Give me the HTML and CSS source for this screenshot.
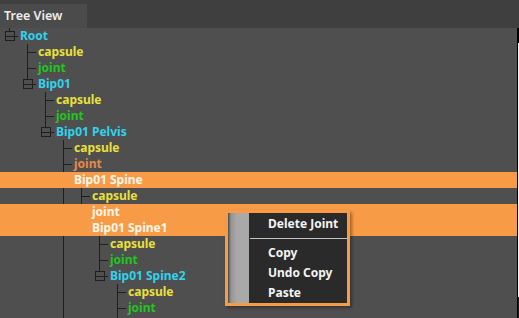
FILE: index.html
```html
<!DOCTYPE html>
<html lang="en">

<head>
    <meta charset="UTF-8">
    <title>Tree View</title>
    <link rel="stylesheet" href="styles.css">
</head>

<body>
    <div class="tab-bar">
        <div class="tab">Tree View</div>
    </div>

    <div class="main">
        <div class="tree">
            <div class="row"><span class="g end"><i class="box"></i></span><span class="label bone">Root</span></div>
            <div class="row"><span class="g"></span><span class="g tee"></span><span class="label capsule">capsule</span></div>
            <div class="row"><span class="g"></span><span class="g tee"></span><span class="label joint">joint</span></div>
            <div class="row"><span class="g"></span><span class="g end"><i class="box"></i></span><span class="label bone">Bip01</span></div>
            <div class="row"><span class="g"></span><span class="g"></span><span class="g tee"></span><span class="label capsule">capsule</span></div>
            <div class="row"><span class="g"></span><span class="g"></span><span class="g tee"></span><span class="label joint">joint</span></div>
            <div class="row"><span class="g"></span><span class="g"></span><span class="g end"><i class="box"></i></span><span class="label bone">Bip01 Pelvis</span></div>
            <div class="row"><span class="g"></span><span class="g"></span><span class="g"></span><span class="g tee"></span><span class="label capsule">capsule</span></div>
            <div class="row"><span class="g"></span><span class="g"></span><span class="g"></span><span class="g tee"></span><span class="label joint-alt">joint</span></div>
            <div class="row sel"><span class="g"></span><span class="g"></span><span class="g"></span><span class="g"></span><span class="label">Bip01 Spine</span></div>
            <div class="row"><span class="g"></span><span class="g"></span><span class="g"></span><span class="g pipe"></span><span class="g tee"></span><span class="label capsule">capsule</span></div>
            <div class="row sel"><span class="g"></span><span class="g"></span><span class="g"></span><span class="g"></span><span class="g"></span><span class="label">joint</span></div>
            <div class="row sel"><span class="g"></span><span class="g"></span><span class="g"></span><span class="g"></span><span class="g"></span><span class="label">Bip01 Spine1</span></div>
            <div class="row"><span class="g"></span><span class="g"></span><span class="g"></span><span class="g pipe"></span><span class="g"></span><span class="g tee"></span><span class="label capsule">capsule</span></div>
            <div class="row"><span class="g"></span><span class="g"></span><span class="g"></span><span class="g pipe"></span><span class="g"></span><span class="g tee"></span><span class="label joint">joint</span></div>
            <div class="row"><span class="g"></span><span class="g"></span><span class="g"></span><span class="g pipe"></span><span class="g"></span><span class="g end"><i class="box"></i></span><span class="label bone">Bip01 Spine2</span></div>
            <div class="row"><span class="g"></span><span class="g"></span><span class="g"></span><span class="g pipe"></span><span class="g"></span><span class="g"></span><span class="g tee"></span><span class="label capsule">capsule</span></div>
            <div class="row"><span class="g"></span><span class="g"></span><span class="g"></span><span class="g pipe"></span><span class="g"></span><span class="g"></span><span class="g tee"></span><span class="label joint">joint</span></div>
            <div class="row"><span class="g"></span><span class="g"></span><span class="g"></span><span class="g pipe"></span><span class="g"></span><span class="g"></span><span class="g pipe"></span></div>

            <div class="menu">
                <div class="menu-strip"></div>
                <div class="menu-items">
                    <div class="menu-item">Delete Joint</div>
                    <div class="menu-sep"></div>
                    <div class="menu-item">Copy</div>
                    <div class="menu-item">Undo Copy</div>
                    <div class="menu-item">Paste</div>
                </div>
            </div>
        </div>
        <div class="edge"></div>
        <div class="track"></div>
    </div>
</body>

</html>
```

FILE: styles.css
```css
body {
    margin: 0;
    width: 519px;
    height: 318px;
    overflow: hidden;
    background-color: #3f3f3f;
    font-family: 'Noto Sans', 'DejaVu Sans', sans-serif;
}

.tab-bar {
    height: 28px;
    display: flex;
    align-items: flex-end;
    background-color: #3f3f3f;
}

.tab {
    width: 83px;
    height: 24px;
    padding-left: 4px;
    line-height: 23px;
    font-size: 12.5px;
    font-weight: 600;
    color: #ececec;
    background-color: #4b4b4b;
}

.main {
    display: flex;
    height: 290px;
}

.tree {
    position: relative;
    flex: 1;
    overflow: hidden;
    background-color: #4f4f4f;
}

.edge {
    width: 1px;
    background-color: #000;
}

.track {
    width: 1px;
    background: linear-gradient(to bottom, #000 15px, #f0f0f0 15px, #f0f0f0 269px, #1c1c1c 269px);
}

.row {
    display: flex;
    height: 16px;
    align-items: center;
}

.row.sel {
    background-color: #f89b46;
}

.g {
    flex: none;
    width: 18px;
    height: 16px;
    background-repeat: no-repeat;
}

/* tree guide lines */
.g.pipe {
    background-image: linear-gradient(#1f1f1f, #1f1f1f);
    background-position: 9px 0;
    background-size: 1px 16px;
}

.g.tee {
    background-image: linear-gradient(#1f1f1f, #1f1f1f), linear-gradient(#1f1f1f, #1f1f1f);
    background-position: 9px 0, 9px 8px;
    background-size: 1px 16px, 9px 1px;
}

.g.end {
    background-image: linear-gradient(#1f1f1f, #1f1f1f), linear-gradient(#1f1f1f, #1f1f1f);
    background-position: 9px 0, 9px 8px;
    background-size: 1px 9px, 9px 1px;
}

.box {
    display: block;
    width: 8px;
    height: 8px;
    margin: 3px 0 0 5px;
    border: 1px solid #1f1f1f;
    background: linear-gradient(#1f1f1f, #1f1f1f) 0 4px / 8px 1px no-repeat, #4f4f4f;
}

.label {
    margin-left: 2px;
    font-size: 12px;
    font-weight: 700;
    line-height: 16px;
    white-space: nowrap;
    color: #fff7ec;
}

.bone {
    color: #30d2ee;
}

.capsule {
    color: #e8e13a;
}

.joint {
    color: #22c41f;
}

.joint-alt {
    color: #e8894a;
}

.menu {
    position: absolute;
    left: 225px;
    top: 182px;
    width: 119px;
    height: 90px;
    display: flex;
    border: 3px solid #f89b46;
    background-color: #2a2a2a;
    box-shadow: 2px 2px 3px rgba(0, 0, 0, 0.35);
}

.menu-strip {
    width: 21px;
    background: linear-gradient(to right, #4a4a4a, #959595 3px, #a9a9a9 9px);
}

.menu-items {
    flex: 1;
    padding-top: 1px;
    padding-left: 1px;
}

.menu-item {
    height: 20px;
    padding-left: 18px;
    line-height: 20px;
    font-size: 12px;
    font-weight: 700;
    color: #f4f4f4;
}

.menu-sep {
    height: 1px;
    margin: 4px 0;
    background-color: #c4c4c4;
}
```
